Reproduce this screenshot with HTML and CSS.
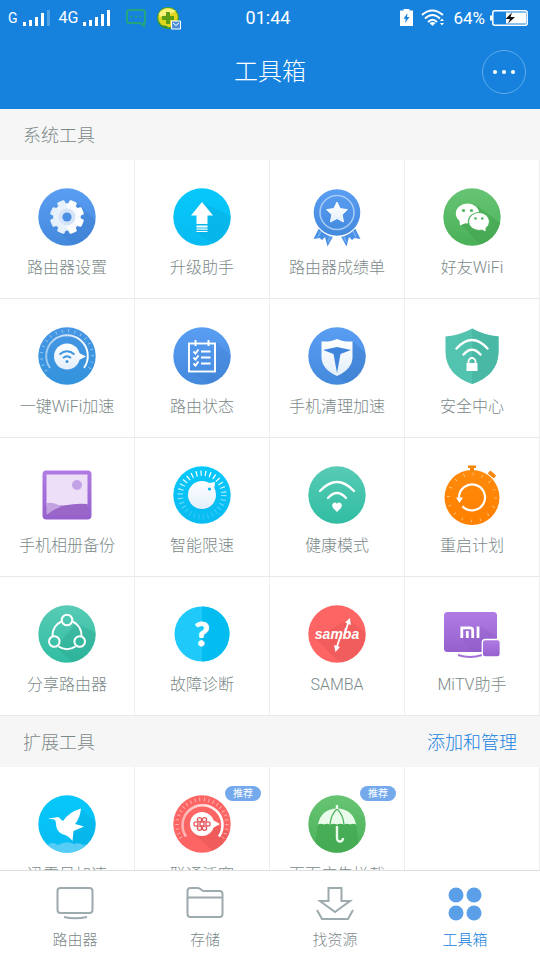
FILE: index.html
```html
<!DOCTYPE html>
<html lang="zh-CN">

<head>
    <meta charset="UTF-8">
    <meta name="viewport" content="width=device-width, initial-scale=1.0">
    <title>工具箱</title>
    <link rel="stylesheet" href="styles.css">
</head>

<body>
    <!-- shared gradients and clip -->
    <svg class="defs" aria-hidden="true">
        <defs>
            <linearGradient id="blue" x2="0" y2="1"><stop stop-color="#5a9ef3"/><stop offset="1" stop-color="#4389dc"/></linearGradient>
            <linearGradient id="azure" x2="0" y2="1"><stop stop-color="#4796e4"/><stop offset="1" stop-color="#3393dc"/></linearGradient>
            <linearGradient id="cyan" x2="0" y2="1"><stop stop-color="#06c8fb"/><stop offset="1" stop-color="#08bbf1"/></linearGradient>
            <linearGradient id="green" x2="0" y2="1"><stop stop-color="#67c474"/><stop offset="1" stop-color="#4ab158"/></linearGradient>
            <linearGradient id="teal" x2="0" y2="1"><stop stop-color="#58cbb5"/><stop offset="1" stop-color="#30bda2"/></linearGradient>
            <linearGradient id="purple" x2="0" y2="1"><stop stop-color="#b07ce4"/><stop offset="1" stop-color="#9560cc"/></linearGradient>
            <linearGradient id="orange" x2="0" y2="1"><stop stop-color="#ff8a0c"/><stop offset="1" stop-color="#ff8000"/></linearGradient>
            <linearGradient id="pale" x2="0" y2="1"><stop stop-color="#fff"/><stop offset="1" stop-color="#e3effb"/></linearGradient>
            <linearGradient id="fade" x2="1" y2="0"><stop stop-color="#fff" stop-opacity=".5"/><stop offset="1" stop-color="#fff"/></linearGradient>
            <linearGradient id="fadeTicks" x1="0" y1="1" x2="0" y2="0"><stop offset=".1" stop-color="#fff" stop-opacity=".15"/><stop offset=".9" stop-color="#fff"/></linearGradient>
            <clipPath id="disc"><circle cx="29" cy="29" r="28.7"/></clipPath>
        </defs>
    </svg>

    <header class="header">
        <div class="status-bar">
            <div class="status-left">
                <span class="net net-small">G</span>
                <svg class="signal" width="28" height="17" viewBox="0 0 28 17" fill="#fff"><path d="M0 13h3v4H0zM6 11h3v6H6zM12 8h3v9h-3zM18 4h3v13h-3z"/><path d="M24 1h3v16h-3z" opacity=".25"/></svg>
                <span class="net">4G</span>
                <svg class="signal" width="28" height="17" viewBox="0 0 28 17" fill="#fff"><path d="M0 13h3v4H0zM6 11h3v6H6zM12 8h3v9h-3zM18 5h3v12h-3zM24 1h3v16h-3z"/></svg>
                <svg class="chat" width="22" height="20" viewBox="0 0 22 20" fill="none" stroke="#21a67d" stroke-width="2"><path d="M4 2h14q2 0 2 2v9q0 2-1 2v3l-4-3H4q-2 0-2-2V4q0-2 2-2z"/><path d="M5.500 8.500h2m2.500 0h2m2.500 0h2"/></svg>
                <svg class="ball" width="24" height="24" viewBox="0 0 24 24"><circle cx="11" cy="12" r="11" fill="#3d9b35"/><circle cx="11" cy="11.500" r="9.800" fill="#e0d51f"/><path d="M2 7q7-8 17-2l-6 3-10 3z" fill="#fbf27c"/><path d="M9 6h4v4h4v4h-4v4H9v-4H5v-4h4z" fill="#5c9e14"/><path d="M2 18q4 4 9 4l-1-2q-4 0-8-2z" fill="#2c8a3a"/><path d="M14.500 15h9v8h-9z" fill="#4f8fd8" stroke="#fff" stroke-width="1"/><path d="M16 17l3 2.500 3-2.500" fill="none" stroke="#fff"/></svg>
            </div>
            <time class="clock">01:44</time>
            <div class="status-right">
                <svg width="13" height="17" viewBox="0 0 13 17"><path d="M3.500 1.500V0h6v1.500H13V17H0V1.500z" fill="#fff"/><path d="M7.500 4L3.500 9.800h2.300L5 14l4.500-6H7z" fill="#1682de"/></svg>
                <svg class="wifi" width="24" height="18" viewBox="0 0 24 18" fill="none" stroke="#fff" stroke-width="2"><path d="M1 6q10-9 21 0M4 9.500q7.500-7 15 0M7 13q4.500-4.500 9 0"/><path d="M8.500 14q3-2 6 0l-3 3z" fill="#fff" stroke="none"/><path d="M19 12l2-2.500 2 2.500zM19 14l2 2.500 2-2.500z" fill="#fff" stroke="none"/></svg>
                <span class="percent">64%</span>
                <svg class="battery" width="38" height="16" viewBox="0 0 38 16"><path d="M0 5.500h2v5H0z" fill="#fff"/><rect x="2.800" y=".8" width="34.400" height="14.400" rx="2" fill="none" stroke="#fff" stroke-width="1.500"/><path d="M16 2.500h20v11H16z" fill="#fff"/><path d="M22 2.500L15.500 9H20l-2 4.500L25 7h-4.500z" fill="#111"/></svg>
            </div>
        </div>
        <div class="title-bar">
            <h1>工具箱</h1>
            <button class="more" type="button" aria-label="更多">
                <svg width="24" height="6" viewBox="0 0 24 6" fill="#fff"><circle cx="3" cy="3" r="2.100"/><circle cx="12" cy="3" r="2.100"/><circle cx="21" cy="3" r="2.100"/></svg>
            </button>
        </div>
    </header>

    <main class="content">
        <div class="section-head">
            <h2>系统工具</h2>
        </div>
        <div class="tool-grid">
            <a class="tool" href="#">
                <svg class="tool-icon" viewBox="0 0 58 58">
                    <circle cx="29" cy="29" r="28.700" fill="url(#blue)"/>
                    <path clip-path="url(#disc)" d="M38 14l28 26-24 22-20-17z" fill="#3f7fd0" opacity=".45"/>
                    <g fill="url(#pale)"><circle cx="29" cy="29" r="13.800"/>
                        <rect x="25" y="12" width="8" height="34" rx="1.500" transform="rotate(22.500 29 29)"/>
                        <rect x="25" y="12" width="8" height="34" rx="1.500" transform="rotate(67.500 29 29)"/>
                        <rect x="25" y="12" width="8" height="34" rx="1.500" transform="rotate(112.500 29 29)"/>
                        <rect x="25" y="12" width="8" height="34" rx="1.500" transform="rotate(157.500 29 29)"/></g>
                    <circle cx="29" cy="29" r="8.500" fill="#d5e4f8"/>
                    <circle cx="29" cy="29" r="4.600" fill="#4a8fe2"/>
                </svg>
                <span>路由器设置</span>
            </a>
            <a class="tool" href="#">
                <svg class="tool-icon" viewBox="0 0 58 58">
                    <circle cx="29" cy="29" r="28.700" fill="url(#cyan)"/>
                    <path clip-path="url(#disc)" d="M29 14l32 16-12 32-26-18z" fill="#06a9dc" opacity=".4"/>
                    <path d="M29 14l11 13.500h-5.500V36h-11v-8.500H18z" fill="#fff"/>
                    <path d="M23.500 37.500h11v2h-11zM23.500 40.500h11v1.200h-11zM23.500 43h11v.9h-11z" fill="#fff"/>
                </svg>
                <span>升级助手</span>
            </a>
            <a class="tool" href="#">
                <svg class="tool-icon" viewBox="0 0 58 58">
                    <path d="M11 40l-5.500 11 6-1 2.500 2 3-3 2.500 9.500 5.500-10zM47 40l5.500 11-6-1-2.500 2-3-3-2.500 9.500-5.500-10z" fill="#4a91e6"/>
                    <path d="M13 43l-3 6M23 46l-3 8M45 43l3 6M35 46l3 8" stroke="#77b0f2" stroke-width="1.500"/>
                    <circle cx="29" cy="24.500" r="24.500" fill="#fff"/>
                    <circle cx="29" cy="24.500" r="23.300" fill="url(#blue)"/>
                    <circle cx="29" cy="24.500" r="17" fill="none" stroke="#a4caf6" stroke-width="1.600"/>
                    <path d="M29 14l3.200 6.600 7.300 1-5.300 5.100 1.300 7.200-6.500-3.400-6.500 3.400 1.300-7.200-5.300-5.100 7.300-1z" fill="url(#pale)" stroke="#f4f9ff" stroke-linejoin="round"/>
                </svg>
                <span>路由器成绩单</span>
            </a>
            <a class="tool" href="#">
                <svg class="tool-icon" viewBox="0 0 58 58">
                    <circle cx="29" cy="29" r="28.700" fill="url(#green)"/>
                    <path clip-path="url(#disc)" d="M34 18l30 22-20 24-26-28z" fill="#3f9f4c" opacity=".5"/>
                    <ellipse cx="24.500" cy="25.500" rx="11.700" ry="10" fill="#fff"/>
                    <path d="M16.500 32l.5 5.500 7-3z" fill="#fff"/>
                    <ellipse cx="36" cy="33.500" rx="10.600" ry="9" fill="#fff" stroke="#50b45d" stroke-width="1.200"/>
                    <path d="M38 41l4.500 2.500v-4z" fill="#fff"/>
                    <g fill="#50b45d"><circle cx="20.500" cy="22.500" r="1.600"/><circle cx="28.500" cy="22.500" r="1.600"/><circle cx="32.500" cy="30.500" r="1.300"/><circle cx="39.300" cy="30.500" r="1.300"/></g>
                </svg>
                <span>好友WiFi</span>
            </a>

            <a class="tool" href="#">
                <svg class="tool-icon" viewBox="0 0 58 58">
                    <circle cx="29" cy="29" r="28.700" fill="url(#azure)"/>
                    <path d="M8 44A25.600 25.600 0 1 1 50 44" fill="none" stroke="#a8d0f3" stroke-width="3" stroke-dasharray=".8 5.500"/>
                    <path d="M12 41A20.800 20.800 0 1 1 46 41" fill="none" stroke="url(#fade)" stroke-width="1.900"/>
                    <path d="M40 25.500l8 4-8 4z" fill="#fff"/>
                    <circle cx="29" cy="29.500" r="13" fill="url(#pale)"/>
                    <path d="M21.500 27.500q7.500-6.500 15 0M25 31q4-3.500 8 0" fill="none" stroke="#3d94df" stroke-width="1.700"/>
                    <circle cx="29" cy="34.500" r="1.500" fill="#3d94df"/>
                </svg>
                <span>一键WiFi加速</span>
            </a>
            <a class="tool" href="#">
                <svg class="tool-icon" viewBox="0 0 58 58">
                    <circle cx="29" cy="29" r="28.700" fill="url(#blue)"/>
                    <path clip-path="url(#disc)" d="M43 15l22 20-18 26-31-16h27z" fill="#3f7fd0" opacity=".35"/>
                    <g fill="none" stroke="#fff" stroke-width="1.900"><rect x="16" y="16.500" width="26" height="28"/><path d="M22.500 13v6M35.500 13v6"/><path d="M20.500 24.500l2 2 3-4M28 24.500h9.500M20.500 30.500l2 2 3-4M28 30.500h9.500M20.500 36.500l2 2 3-4M28 36.500h9.500"/></g>
                </svg>
                <span>路由状态</span>
            </a>
            <a class="tool" href="#">
                <svg class="tool-icon" viewBox="0 0 58 58">
                    <circle cx="29" cy="29" r="28.700" fill="url(#blue)"/>
                    <path clip-path="url(#disc)" d="M44 14l24 22-24 24-18-12z" fill="#3f7fd0" opacity=".5"/>
                    <path d="M29 12q6 3 15.500 2.500V30q0 12-15.500 19-15.500-7-15.500-19V14.500Q23 15 29 12z" fill="url(#pale)"/>
                    <path d="M15 23l14-3 14 3-10.500 4L29 46l-3.500-19z" fill="#3f85dc"/>
                </svg>
                <span>手机清理加速</span>
            </a>
            <a class="tool" href="#">
                <svg class="tool-icon" viewBox="0 0 58 58">
                    <path d="M29 1.500Q40 8 55.500 9.500V25Q55 48 29 57 3 48 2.500 25V9.500Q18 8 29 1.500z" fill="#52c3ae"/>
                    <path d="M29 1.500Q40 8 55.500 9.500V25Q55 48 29 57z" fill="#49b9a5"/>
                    <path d="M13.500 21.500q15.500-17 31 0M20.500 27.500q8.500-9.500 17 0" fill="none" stroke="#fff" stroke-width="2.400" stroke-linecap="round"/>
                    <path d="M23.500 36h11v8h-11z" fill="#fff"/>
                    <path d="M25.500 37v-2.500a3.500 3.500 0 0 1 7 0V37" fill="none" stroke="#fff" stroke-width="1.800"/>
                </svg>
                <span>安全中心</span>
            </a>

            <a class="tool" href="#">
                <svg class="tool-icon" viewBox="0 0 58 58">
                    <rect x="4.500" y="4.500" width="49" height="49" rx="4" fill="url(#purple)"/>
                    <path d="M8.500 8.500h41v31H8.500z" fill="#eddff8"/>
                    <circle cx="39" cy="19" r="5" fill="#c3a2e6"/>
                    <path d="M8.500 37q8-1 15 4l-15 8z" fill="#c3a2e0"/>
                    <path d="M8.500 49q15-13 41-11v11.500h-41z" fill="#9a66c8"/>
                </svg>
                <span>手机相册备份</span>
            </a>
            <a class="tool" href="#">
                <svg class="tool-icon" viewBox="0 0 58 58">
                    <circle cx="29" cy="29" r="28.700" fill="url(#cyan)"/>
                    <circle cx="29" cy="29" r="21.800" fill="none" stroke="url(#fadeTicks)" stroke-width="5.500" stroke-dasharray="1.200 3.370"/>
                    <path d="M34 17.500l8-1.500-1 9z" fill="#fff"/>
                    <circle cx="29" cy="29.500" r="14" fill="#079fd0" opacity=".4"/>
                    <circle cx="29" cy="29" r="14" fill="url(#pale)"/>
                    <circle cx="36.500" cy="23" r="1.600" fill="#08b5e8"/>
                </svg>
                <span>智能限速</span>
            </a>
            <a class="tool" href="#">
                <svg class="tool-icon" viewBox="0 0 58 58">
                    <circle cx="29" cy="29" r="28.700" fill="url(#teal)"/>
                    <path d="M12 25q17-18 34 0M20 32q9-10 18 0" fill="none" stroke="#fff" stroke-width="2.300" stroke-linecap="round"/>
                    <path d="M29 46l-4-4q-2-4 1-5.300 2-.7 3 1.300 1-2 3-1.300 3 1.300 1 5.300z" fill="#fff"/>
                </svg>
                <span>健康模式</span>
            </a>
            <a class="tool" href="#">
                <svg class="tool-icon" viewBox="0 0 58 58">
                    <path d="M25-.5h8V2h-2v4h-4V2h-2z" fill="#f5870f"/>
                    <rect x="45" y="6.500" width="8" height="4" rx="1" fill="#f5870f" transform="rotate(40 49 8.500)"/>
                    <circle cx="29" cy="31.500" r="27.500" fill="url(#orange)"/>
                    <circle cx="29" cy="31.500" r="23.500" fill="none" stroke="#ffc27e" stroke-width="3" stroke-dasharray=".9 8.330"/>
                    <path d="M16 31.500a13 13 0 1 1 3.500 8.800" fill="none" stroke="#fff" stroke-width="2.200"/>
                    <path d="M13 31.500h7L16.500 37z" fill="#fff"/>
                </svg>
                <span>重启计划</span>
            </a>

            <a class="tool" href="#">
                <svg class="tool-icon" viewBox="0 0 58 58">
                    <circle cx="29" cy="29" r="28.700" fill="url(#teal)"/>
                    <path clip-path="url(#disc)" d="M38 18l28 14-26 30-22-20z" fill="#28a48c" opacity=".35"/>
                    <g fill="none" stroke="#fff" stroke-width="2"><path d="M23.500 16.500A15 15 0 0 0 14.500 31M34.500 16.500A15 15 0 0 1 43.500 31M20.500 41.500a15 15 0 0 0 17 0"/><circle cx="29" cy="15" r="5.300"/><circle cx="16.300" cy="36.500" r="5.300"/><circle cx="41.700" cy="36.500" r="5.300"/></g>
                </svg>
                <span>分享路由器</span>
            </a>
            <a class="tool" href="#">
                <svg class="tool-icon" viewBox="0 0 58 58">
                    <circle cx="29" cy="29" r="27.500" fill="#1fcafa"/>
                    <path d="M29 1.500a27.500 27.500 0 0 1 0 55z" fill="#03bcf0"/>
                    <text class="question" x="29" y="41" text-anchor="middle">?</text>
                </svg>
                <span>故障诊断</span>
            </a>
            <a class="tool" href="#">
                <svg class="tool-icon" viewBox="0 0 58 58">
                    <circle cx="29" cy="29" r="28.700" fill="#fc6563"/>
                    <path clip-path="url(#disc)" d="M41 14l24 20-24 26-12-5-22-22z" fill="#dd4f50" opacity=".35"/>
                    <text class="samba" x="29" y="34" text-anchor="middle">samba</text>
                    <path d="M36 31l4.500-14M32.500 31L28.500 43" stroke="#fff" stroke-width="1.800"/>
                    <path d="M42 13l1 7-6-2.500zM27.500 47l-1.500-7 6 2z" fill="#fff"/>
                </svg>
                <span>SAMBA</span>
            </a>
            <a class="tool" href="#">
                <svg class="tool-icon" viewBox="0 0 58 58">
                    <rect x="1" y="7" width="53" height="40" rx="3.500" fill="url(#purple)"/>
                    <path d="M37 21l17 11v15H30L18 33z" fill="#8c58c4" opacity=".3"/>
                    <path d="M15 50q12 4 24 0" fill="none" stroke="#a570da" stroke-width="2"/>
                    <path d="M18.800 33V22.800h8.400q2.500 0 2.500 2.500V33M24.300 26v7M35 21.500V33" fill="none" stroke="#fff" stroke-width="2.800"/>
                    <rect x="39.300" y="34.500" width="18" height="17.500" rx="3" fill="url(#purple)" stroke="#fff" stroke-width="1.300"/>
                </svg>
                <span>MiTV助手</span>
            </a>
        </div>

        <div class="section-head">
            <h2>扩展工具</h2>
            <a href="#">添加和管理</a>
        </div>
        <div class="tool-grid">
            <a class="tool" href="#">
                <svg class="tool-icon" viewBox="0 0 58 58">
                    <circle cx="29" cy="29" r="28.700" fill="url(#cyan)"/>
                    <path clip-path="url(#disc)" d="M42 14l26 20-24 26-14-18z" fill="#06a9dc" opacity=".35"/>
                    <path clip-path="url(#disc)" d="M0 50q5-3 10 0 4-4 10 0 8-5 16-1 5-2 9 1 6-2 13 1v10H0z" fill="#55cdf5"/>
                    <path d="M10 23.500l7.500-1q3-1.500 5.500 2l2 1.500Q31 17 43 13.500q-1 10-6 15.500l9 2.500L35.500 36l-1 10q-4-5-7.500-6-8-2-9-10 0-5-2-5.500z" fill="#fff"/>
                </svg>
                <span>迅雷易加速</span>
            </a>
            <a class="tool" href="#">
                <svg class="tool-icon" viewBox="0 0 58 58">
                    <circle cx="29" cy="29" r="28.700" fill="#fc6563"/>
                    <path clip-path="url(#disc)" d="M42 29l20 12-16 20-24-21z" fill="#dd4f50" opacity=".4"/>
                    <path d="M8 43A25 25 0 1 1 50 43" fill="none" stroke="#fcb0ae" stroke-width="3.500" stroke-dasharray="1 3.600"/>
                    <path d="M13 41.500A20 20 0 1 1 46 41.500" fill="none" stroke="url(#fade)" stroke-width="2.600"/>
                    <path d="M38 24l9 5-9 5z" fill="#fff"/>
                    <circle cx="29" cy="29" r="12" fill="#fff"/>
                    <g fill="none" stroke="#e2575a" stroke-width="1.300"><circle cx="23" cy="29" r="2.100"/><circle cx="29" cy="29" r="2.100"/><circle cx="35" cy="29" r="2.100"/><circle cx="26.500" cy="24.800" r="2.100"/><circle cx="31.500" cy="24.800" r="2.100"/><circle cx="26.500" cy="33.200" r="2.100"/><circle cx="31.500" cy="33.200" r="2.100"/></g>
                </svg>
                <span>联通沃宽</span>
                <em class="badge">推荐</em>
            </a>
            <a class="tool" href="#">
                <svg class="tool-icon" viewBox="0 0 58 58">
                    <circle cx="29" cy="29" r="28.700" fill="url(#green)"/>
                    <path clip-path="url(#disc)" d="M10 29h38l4 30H6z" fill="#43aa52" opacity=".8"/>
                    <path d="M10 29.500Q13 14 29 13.500 45 14 48 29.500q-3-1.500-6 0-3-1.500-6 0-3.500-1.500-7 0-3.500-1.500-7 0-3-1.500-6 0-3-1.500-6 0z" fill="#e9fbea"/>
                    <path d="M29 14q-6 5-7 15.500M29 14q6 5 7 15.500" fill="none" stroke="#55b763" stroke-width="1.400"/>
                    <path d="M29 10v4M29 31v12.500a3 3 0 0 0 6 0V43" fill="none" stroke="#e9fbea" stroke-width="2.400"/>
                </svg>
                <span>页面广告拦截</span>
                <em class="badge">推荐</em>
            </a>
            <div class="tool"></div>
        </div>
    </main>

    <nav class="tab-bar">
        <a class="tab" href="#">
            <svg viewBox="0 0 40 36"><rect x="2.500" y="2" width="35" height="25" rx="3"/><path d="M9 31q11 2.500 23 0"/></svg>
            <span>路由器</span>
        </a>
        <a class="tab" href="#">
            <svg viewBox="0 0 40 36"><path d="M2.500 5q0-3 3-3h7q2 0 3.500 1.500T19 5h15.500q3 0 3 3v20q0 3-3 3h-29q-3 0-3-3zM2.500 11.500h35"/></svg>
            <span>存储</span>
        </a>
        <a class="tab" href="#">
            <svg viewBox="0 0 40 36"><path d="M13.500 2h13v13H35L20 26 5 15h8.500zM2 24l5 9h26l5-9"/></svg>
            <span>找资源</span>
        </a>
        <a class="tab active" href="#" aria-current="page">
            <svg viewBox="0 0 40 36"><circle cx="11" cy="9" r="7.500"/><circle cx="29" cy="9" r="7.500"/><circle cx="11" cy="27" r="7.500"/><circle cx="29" cy="27" r="7.500"/></svg>
            <span>工具箱</span>
        </a>
    </nav>
</body>

</html>
```
FILE: styles.css
```css
* {
    box-sizing: border-box;
}

body {
    font-family: Roboto, "Noto Sans CJK SC", sans-serif;
    font-weight: 300;
    color: #7c8989;
    background: #fff;
    display: flex;
    flex-direction: column;
    height: 100vh;
    margin: 0;
}

a {
    color: inherit;
    text-decoration: none;
}

h1,
h2 {
    margin: 0;
    font-weight: 300;
}

.defs {
    position: absolute;
    width: 0;
    height: 0;
}

/* header */
.header {
    flex: none;
    background: #1682de;
    color: #fff;
}

.status-bar {
    display: grid;
    grid-template-columns: 1fr auto 1fr;
    align-items: center;
    height: 35px;
    padding: 0 12px 0 8px;
    font-weight: 400;
}

.status-left,
.status-right {
    display: flex;
    align-items: center;
}

.status-right {
    justify-content: flex-end;
    gap: 8px;
}

.net {
    font-size: 16px;
    margin-right: 5px;
}

.net-small {
    font-size: 14px;
}

.signal {
    margin-right: 8px;
}

.chat {
    margin: 0 10px 0 6px;
}

.clock {
    font-size: 18px;
}

.percent {
    font-size: 17px;
}

.battery {
    margin-left: -3px;
}

.title-bar {
    display: grid;
    grid-template-columns: 1fr auto 1fr;
    align-items: center;
    height: 74px;
    padding: 0 14px;
}

.title-bar h1 {
    grid-column: 2;
    font-size: 24px;
    line-height: 36px;
}

.more {
    justify-self: end;
    display: flex;
    align-items: center;
    justify-content: center;
    width: 44px;
    height: 44px;
    padding: 0;
    background: none;
    border: 1px solid #5fabea;
    border-radius: 50%;
    cursor: pointer;
}

/* content */
.content {
    flex: 1;
    min-height: 0;
    overflow-y: auto;
    scrollbar-width: none;
}

.section-head {
    display: flex;
    align-items: center;
    justify-content: space-between;
    height: 50px;
    padding: 0 23px;
    background: #f6f6f6;
    font-size: 18px;
}

.section-head h2 {
    font-size: 18px;
}

.section-head a {
    color: #1682de;
}

.tool-grid {
    display: grid;
    grid-template-columns: repeat(4, 1fr);
    border-top: 1px solid #f6f6f6;
}

.tool {
    position: relative;
    display: flex;
    flex-direction: column;
    align-items: center;
    gap: 10px;
    height: 139px;
    padding-top: 28px;
    border-right: 1px solid #eee;
    border-bottom: 1px solid #e9e9e9;
    font-size: 16px;
    line-height: 24px;
    white-space: nowrap;
}

.tool-icon {
    width: 58px;
    height: 58px;
    flex: none;
    overflow: visible;
}

.question {
    font: 900 32px Lato, sans-serif;
    fill: #fff;
    stroke: #fff;
    stroke-linejoin: round;
}

.samba {
    font: italic 700 14px "Liberation Sans", sans-serif;
    fill: #fff;
}

.badge {
    position: absolute;
    top: 19px;
    right: 8px;
    padding: 0 8px;
    background: #74aaec;
    border-radius: 8px;
    color: #fff;
    font-size: 10px;
    font-style: normal;
    font-weight: 400;
    line-height: 15px;
}

/* bottom tabs */
.tab-bar {
    flex: none;
    display: flex;
    height: 90px;
    padding: 0 10px;
    background: #fff;
    border-top: 1px solid #dcdfe0;
}

.tab {
    flex: 1;
    display: flex;
    flex-direction: column;
    align-items: center;
    gap: 6px;
    padding-top: 15px;
    font-size: 15px;
    line-height: 24px;
}

.tab svg {
    width: 40px;
    height: 36px;
    fill: none;
    stroke: #9daaae;
    stroke-width: 2;
}

.tab.active {
    color: #1682de;
}

.tab.active svg {
    fill: #5c9fe9;
    stroke: none;
}
```
